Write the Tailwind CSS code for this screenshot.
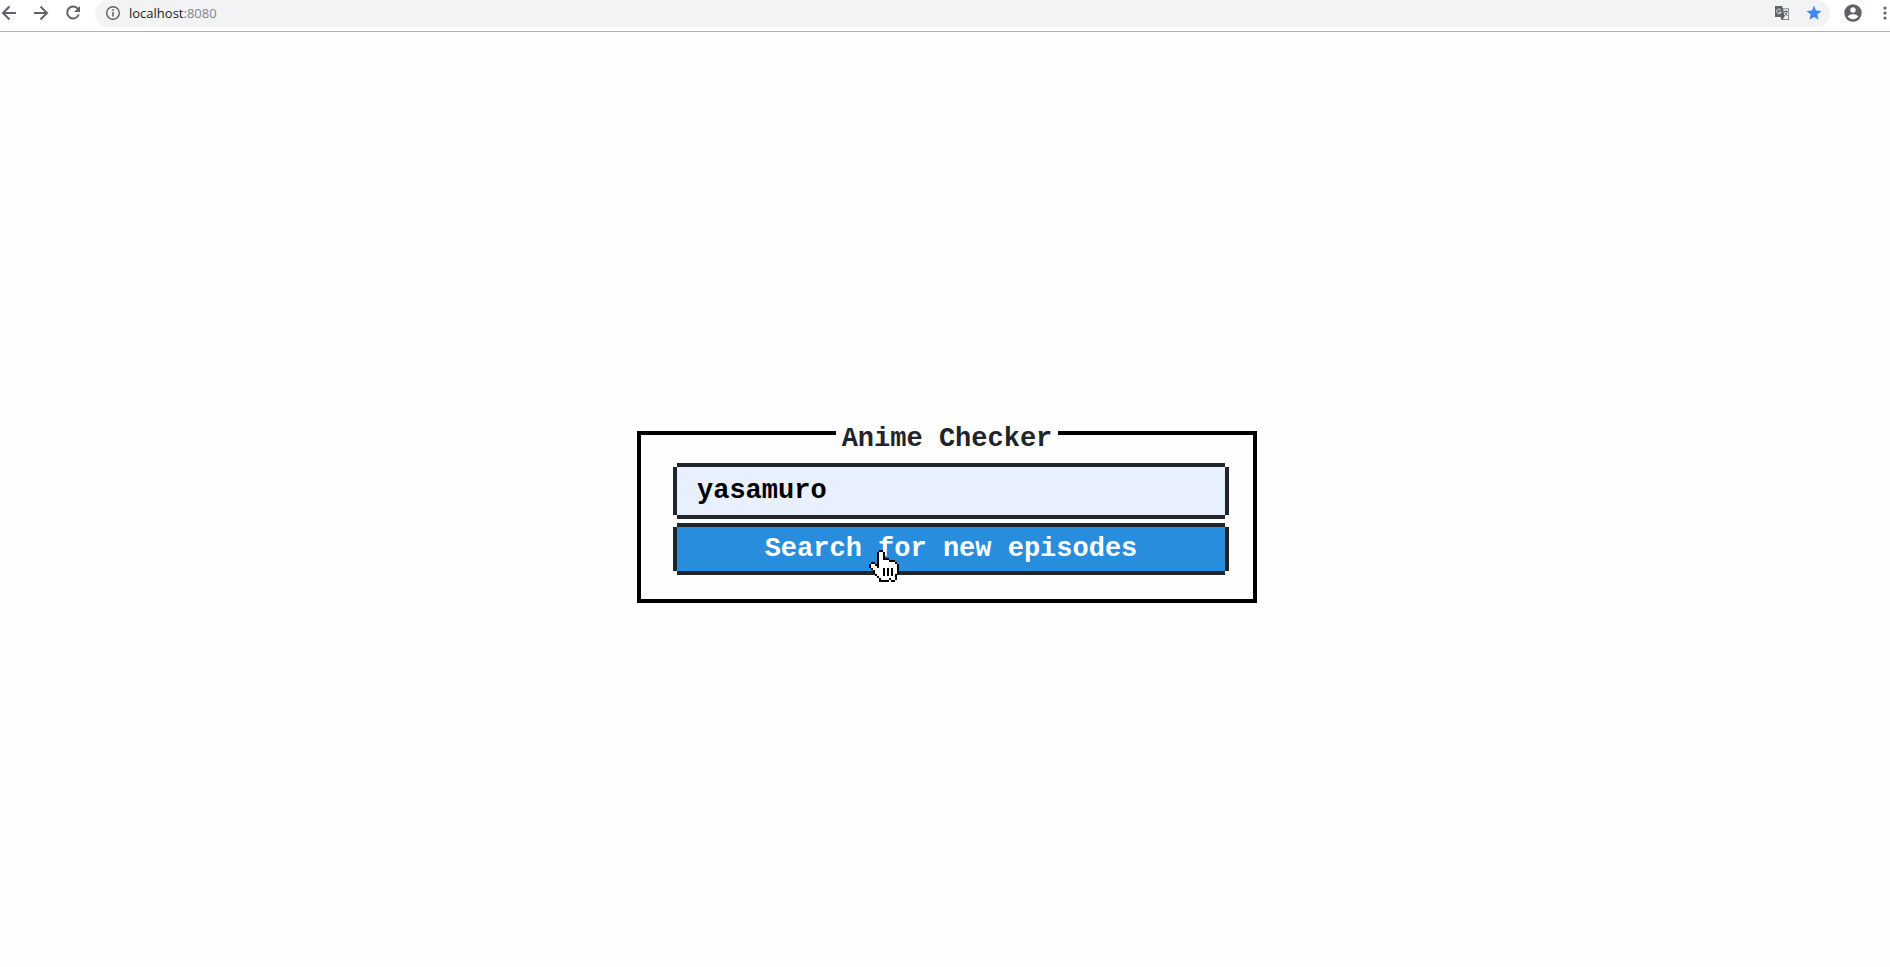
<!DOCTYPE html>
<html lang="en">
<head>
<meta charset="utf-8">
<title>Anime Checker</title>
<script src="https://cdn.jsdelivr.net/npm/@tailwindcss/browser@4"></script>
</head>
<body class="flex min-h-screen flex-col overflow-x-hidden bg-[#fefefe]">
<header class="flex h-8 items-start border-b border-[#b0b0b2] bg-white text-[#5f6368]">
  <nav class="flex h-[27px] w-[95px] shrink-0 items-center gap-4 pb-0.5 pl-px">
    <button aria-label="Back" class="size-4"><svg viewBox="0 0 16 16" class="size-4" fill="none" stroke="currentColor" stroke-width="2"><path d="M15 8H2M8.500 1.500L2 8l6.500 6.500"/></svg></button>
    <button aria-label="Forward" class="size-4"><svg viewBox="0 0 16 16" class="size-4" fill="none" stroke="currentColor" stroke-width="2"><path d="M1 8h13M7.500 1.500L14 8l-6.500 6.500"/></svg></button>
    <button aria-label="Reload" class="size-4"><svg viewBox="0 0 16 16" class="size-4" fill="none"><path d="M13 4A6 6 0 1 0 13.800 9.500" stroke="currentColor" stroke-width="2"/><path d="M15 1v6H9z" fill="currentColor"/></svg></button>
  </nav>
  <div class="flex h-[27px] grow items-center rounded-r-full rounded-bl-full rounded-tl-full bg-[#f1f3f4] pr-2 pb-0.5 pl-2.5">
    <svg viewBox="0 0 16 16" class="size-4" fill="none"><circle cx="8" cy="8" r="6.300" stroke="currentColor" stroke-width="1.400"/><path d="M7.200 7h1.600v4.500H7.200zM7.200 4.300h1.600v1.600H7.200z" fill="currentColor"/></svg>
    <a href="#" class="ml-2 grow font-['Open_Sans',sans-serif] text-[13px] leading-5 text-[#202124]">localhost<span class="text-[#80868b]">:8080</span></a>
    <button aria-label="Translate this page" class="mr-4 size-4"><svg viewBox="0 0 16 16" class="size-4"><path d="M1 1h7l1 2.500h6V15H7.500l-1-3H1z" fill="#5f6368"/><path d="M9.300 4.300h5v9.900H8.500l2-2.200z" fill="#f1f3f4"/><path d="M7 5.200A2.300 2.300 0 1 0 7.200 7H5" stroke="#f1f3f4" fill="none"/><path d="M9.800 6.500h4M11.800 5.500v1M13 6.500c-.5 2-1.500 3.500-3 4.500M10.500 7.500l3 3.500" stroke="#5f6368" fill="none"/></svg></button>
    <button aria-label="Bookmarked" class="size-4"><svg viewBox="0 0 16 16" class="size-4"><path fill="#4285f4" d="M8 .5l2 5.100 5.500.4-4.200 3.500 1.300 5.300L8 11.900l-4.600 2.900 1.300-5.300L.5 6l5.500-.4z"/></svg></button>
  </div>
  <div class="flex h-[27px] w-15 shrink-0 items-center pb-0.5 pl-3.5">
    <button aria-label="Profile" class="size-[18px]"><svg viewBox="0 0 18 18" class="size-[18px]"><circle cx="9" cy="9" r="8.700" fill="#5f6368"/><circle cx="9" cy="6" r="2.700" fill="#fff"/><path d="M3.800 12.600c1-1.700 3.300-2.300 5.200-2.300s4.200.6 5.200 2.300a6.300 6.300 0 0 1-10.400 0z" fill="#fff"/></svg></button>
    <button aria-label="Menu" class="ml-[21px] h-4 w-1"><svg viewBox="0 0 4 16" class="h-4 w-1" fill="currentColor"><circle cx="2" cy="3" r="1.600"/><circle cx="2" cy="8" r="1.600"/><circle cx="2" cy="13" r="1.600"/></svg></button>
  </div>
</header>
<main class="flex grow items-center justify-center pt-[18px] pl-1 font-['Liberation_Mono',monospace] text-[27px] leading-6 font-bold">
  <form class="w-full max-w-[620px]">
    <fieldset class="min-w-0 border-4 border-black px-7 pb-7">
      <legend class="mx-auto px-1.5 pt-3 text-[#212529]">Anime Checker</legend>
      <div class="flex flex-col gap-3 pt-4 pl-2">
        <input aria-label="User name" value="yasamuro" class="h-12 w-full min-w-0 bg-[#e8f0fe] px-5 text-black shadow-[0_4px_#212529,0_-4px_#212529,4px_0_#212529,-4px_0_#212529] outline-none">
        <button type="button" class="relative h-11 w-full bg-[#288ddd] text-white shadow-[0_4px_#212529,0_-4px_#212529,4px_0_#212529,-4px_0_#212529]">Search for new episodes
          <svg id="hand" aria-hidden="true" viewBox="0 0 15 16" class="absolute top-[23px] left-[192px] h-8 w-[30px]" shape-rendering="crispEdges"></svg>
        </button>
      </div>
    </fieldset>
  </form>
</main>
<script>
// Pixel map of the pointer: B is outline, W is fill.
const rows = [
  ".....BB........",
  "....BWWB.......",
  "....BWWB.......",
  "....BWWB.......",
  "....BWWBBB.....",
  "....BWWWWWBBB..",
  ".BB.BWWWWWWWWB.",
  "BWWBBWWWWWWWWWB",
  "BWWWBWWWWWWWWWB",
  ".BWWWWWBWBWBWWB",
  "..BWWWWBWBWBWWB",
  "..BWWWWBWBWBWWB",
  "...BWWWBWBWBWB.",
  "....BWWWWWWWWB.",
  ".....BWWWWBWWB.",
  ".....BBBBB.BB.."
];
document.getElementById("hand").innerHTML = rows.map((r, y) => [...r].map((c, x) =>
  c === "." ? "" : `<rect x="${x}" y="${y}" width="1" height="1" fill="${c === "B" ? "#000" : "#fff"}"/>`).join("")).join("");
</script>
</body>
</html>
